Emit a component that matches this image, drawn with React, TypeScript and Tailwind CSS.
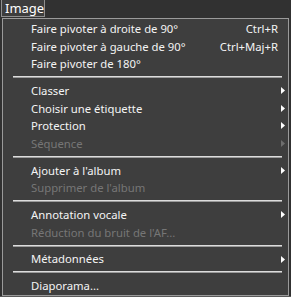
import React from 'react';

type Entry =
  | { kind: 'item'; label: string; shortcut?: string; sub?: boolean; disabled?: boolean }
  | { kind: 'sep' };

const entries: Entry[] = [
  { kind: 'item', label: 'Faire pivoter à droite de 90°', shortcut: 'Ctrl+R' },
  { kind: 'item', label: 'Faire pivoter à gauche de 90°', shortcut: 'Ctrl+Maj+R' },
  { kind: 'item', label: 'Faire pivoter de 180°' },
  { kind: 'sep' },
  { kind: 'item', label: 'Classer', sub: true },
  { kind: 'item', label: 'Choisir une étiquette', sub: true },
  { kind: 'item', label: 'Protection', sub: true },
  { kind: 'item', label: 'Séquence', sub: true, disabled: true },
  { kind: 'sep' },
  { kind: 'item', label: "Ajouter à l'album", sub: true },
  { kind: 'item', label: "Supprimer de l'album", disabled: true },
  { kind: 'sep' },
  { kind: 'item', label: 'Annotation vocale', sub: true },
  { kind: 'item', label: "Réduction du bruit de l'AF...", disabled: true },
  { kind: 'sep' },
  { kind: 'item', label: 'Métadonnées', sub: true },
  { kind: 'sep' },
  { kind: 'item', label: 'Diaporama...' },
];

function Arrow({ disabled }: { disabled?: boolean }) {
  return (
    <svg width="4" height="7" viewBox="0 0 4 7" className="shrink-0">
      <polygon points="0,0 4,3.5 0,7" fill={disabled ? '#6e6e6e' : '#ffffff'} />
    </svg>
  );
}

export default function App() {
  return (
    <div
      className="w-[291px] h-[297px] bg-[#313131] overflow-hidden text-[11.3px] leading-none"
      style={{ fontFamily: '"Noto Sans", "Open Sans", sans-serif' }}
    >
      {/* menu bar tab */}
      <div className="h-[18px] flex">
        <div className="ml-[1px] w-[44px] h-[17px] border-x border-b border-[#8e8e8e] bg-[#3d3d3d] text-white text-[13px] flex items-center pl-[3px]">
          Image
        </div>
      </div>

      {/* dropdown */}
      <div className="ml-[2px] w-[287px] h-[278px] border border-[#9a9a9a] bg-[#3e3e3e] pt-[1px] flex flex-col">
        {entries.map((e, i) =>
          e.kind === 'sep' ? (
            <div key={i} className="h-[9.2px] flex items-center pl-[10px] pr-[6px]">
              <div className="w-full h-[2px] bg-[#dcdcdc] border-b border-[#9a9a9a]" />
            </div>
          ) : (
            <div
              key={i}
              className={`h-[17.6px] flex items-center pl-[28px] pr-[1px] ${e.disabled ? 'text-[#767676]' : 'text-[#f4f4f4]'}`}
            >
              <span className="flex-1 whitespace-nowrap">{e.label}</span>
              {e.shortcut && <span className="mr-[9px] whitespace-nowrap">{e.shortcut}</span>}
              {e.sub && (
                <span className="w-[6px] flex items-center">
                  <Arrow disabled={e.disabled} />
                </span>
              )}
            </div>
          )
        )}
      </div>
      <div className="h-[2px] bg-[#5a5a5a]" />
    </div>
  );
}
